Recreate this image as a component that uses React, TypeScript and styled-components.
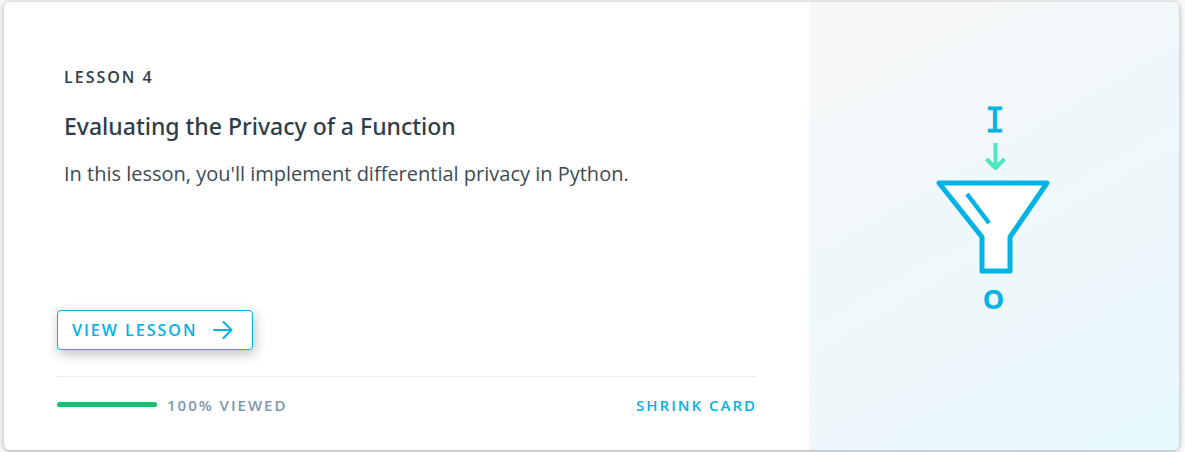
import React from 'react';
import styled, { createGlobalStyle } from 'styled-components';

const GlobalStyle = createGlobalStyle`
  * { box-sizing: border-box; }
  html, body, #root { height: 100%; }
  body {
    margin: 0;
    background: #fafbfc;
    font-family: 'Open Sans', 'Noto Sans', sans-serif;
    color: #2e3d49;
  }
`;

const Page = styled.main`
  display: flex;
  min-height: 100%;
  padding: 2px 6px 2px 4px;
`;

const Card = styled.article`
  display: flex;
  flex: 1;
  min-width: 0;
  border-radius: 6px;
  background: #fff;
  box-shadow: 0 1px 6px rgba(0, 0, 0, 0.35);
`;

const Content = styled.div`
  display: flex;
  flex: 1;
  flex-direction: column;
  min-width: 0;
  padding: 63px 52px 33px 53px;
`;

const Copy = styled.header`
  flex: 1;
  padding-left: 7px;
`;

const Eyebrow = styled.p`
  margin: 0;
  font-size: 16px;
  font-weight: 600;
  line-height: 24px;
  letter-spacing: 2px;
  text-transform: uppercase;
`;

const Title = styled.h2`
  margin: 20px 0 0;
  font-size: 23px;
  font-weight: 500;
  font-family: 'Noto Sans', 'Open Sans', sans-serif;
  line-height: 34px;
`;

const Summary = styled.p`
  margin: 15px 0 0;
  color: #3d4b56;
  font-size: 20px;
  font-weight: 400;
  line-height: 32px;
`;

const ViewButton = styled.button`
  display: flex;
  align-self: flex-start;
  align-items: center;
  gap: 16px;
  height: 40px;
  padding: 0 19px 0 14px;
  border: 1px solid #02b3e4;
  border-radius: 4px;
  background: #fff;
  box-shadow: 2px 4px 12px rgba(0, 0, 0, 0.25);
  color: #02b3e4;
  font: 600 16px/24px 'Open Sans', 'Noto Sans', sans-serif;
  letter-spacing: 2px;
  text-transform: uppercase;
  white-space: nowrap;
  cursor: pointer;
`;

const Footer = styled.footer`
  display: flex;
  align-items: center;
  justify-content: space-between;
  margin-top: 26px;
  padding-top: 16px;
  border-top: 1px solid #e9eef2;
  font-size: 15px;
  font-weight: 600;
  line-height: 24px;
`;

const Viewed = styled.div`
  display: flex;
  align-items: center;
  gap: 10px;
  color: #7d97ad;
  letter-spacing: 2px;
`;

const Track = styled.div`
  width: 100px;
  height: 5px;
  margin-bottom: 1px;
  border-radius: 3px;
  background: #dbe2e8;
`;

const Fill = styled.div`
  height: 100%;
  border-radius: inherit;
  background: #15c26b;
`;

const ShrinkButton = styled.button`
  padding: 0;
  border: 0;
  background: none;
  color: #02b3e4;
  font: inherit;
  letter-spacing: 2px;
  text-transform: uppercase;
  cursor: pointer;
`;

const Artwork = styled.div`
  display: flex;
  flex: 0 0 370px;
  align-items: flex-start;
  justify-content: center;
  padding-top: 98px;
  border-radius: 0 6px 6px 0;
  background: linear-gradient(150deg, #f8f7f7 0%, #f1f7fa 35%, #edf8fb 65%, #e8faff 100%);
`;

const ArrowIcon = () => (
  <svg width="20" height="18" viewBox="0 0 20 18" fill="none" stroke="currentColor" strokeWidth="2" strokeLinecap="round" strokeLinejoin="round" aria-hidden="true">
    <path d="M1 9H18M10.500 1L18.500 9L10.500 17" />
  </svg>
);

const FunnelArt = () => (
  <svg width="120" height="220" viewBox="0 0 120 220" role="img" aria-label="Input passing through a funnel to output">
    <text x="61" y="32" textAnchor="middle" fontFamily="'DejaVu Sans Mono', monospace" fontSize="33" fill="#02b3e4" stroke="#02b3e4" strokeWidth="0.800">I</text>
    <path d="M61.500 43V67M52.500 59L61.500 68L70.500 59" fill="none" stroke="#52e5c2" strokeWidth="4" strokeLinejoin="round" />
    <path d="M5 83H113L76 137V171H48V137Z" fill="#fff" stroke="#02b3e4" strokeWidth="5" strokeLinejoin="round" />
    <path d="M33 94L55 123" fill="none" stroke="#02b3e4" strokeWidth="4.500" />
    <text x="59.500" y="208.500" textAnchor="middle" fontFamily="'Noto Sans', sans-serif" fontWeight="700" fontSize="27" fill="#02b3e4">O</text>
  </svg>
);

export default function App() {
  const percent = 100;
  return (
    <>
      <GlobalStyle />
      <Page>
        <Card>
          <Content>
            <Copy>
              <Eyebrow>Lesson 4</Eyebrow>
              <Title>Evaluating the Privacy of a Function</Title>
              <Summary>In this lesson, you'll implement differential privacy in Python.</Summary>
            </Copy>
            <ViewButton type="button">
              View Lesson
              <ArrowIcon />
            </ViewButton>
            <Footer>
              <Viewed>
                <Track role="progressbar" aria-label="Lesson viewed" aria-valuenow={percent} aria-valuemin={0} aria-valuemax={100}>
                  <Fill style={{ width: `${percent}%` }} />
                </Track>
                <span>{percent}% VIEWED</span>
              </Viewed>
              <ShrinkButton type="button">Shrink Card</ShrinkButton>
            </Footer>
          </Content>
          <Artwork>
            <FunnelArt />
          </Artwork>
        </Card>
      </Page>
    </>
  );
}
